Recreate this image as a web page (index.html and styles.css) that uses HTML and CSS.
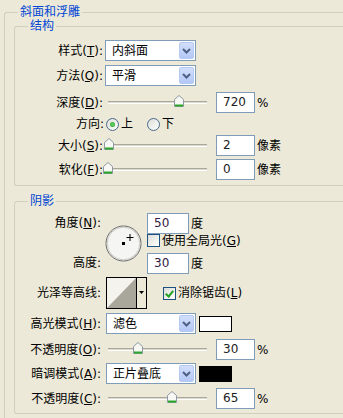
FILE: index.html
```html
<!DOCTYPE html>
<html lang="zh-CN">
<head>
	<meta charset="UTF-8">
	<meta name="viewport" content="width=device-width, initial-scale=1.0">
	<title>斜面和浮雕</title>
	<link rel="stylesheet" href="styles.css">
</head>
<body>
	<fieldset class="group outer">
		<legend>斜面和浮雕</legend>

		<!-- 结构 -->
		<fieldset class="group sub struct">
			<legend>结构</legend>
			<div class="row">
				<span class="lbl">样式(<u>T</u>):</span>
				<div class="select"><span>内斜面</span><i class="drop"><svg width="9" height="6" viewBox="0 0 9 6"><path d="M1 1L4.5 4.5L8 1" fill="none" stroke="#4d6185" stroke-width="2"/></svg></i></div>
			</div>
			<div class="row gap4">
				<span class="lbl">方法(<u>Q</u>):</span>
				<div class="select"><span>平滑</span><i class="drop"><svg width="9" height="6" viewBox="0 0 9 6"><path d="M1 1L4.5 4.5L8 1" fill="none" stroke="#4d6185" stroke-width="2"/></svg></i></div>
			</div>
			<div class="row gap6">
				<span class="lbl">深度(<u>D</u>):</span>
				<div class="slider"><div class="track"><i class="thumb" style="left: 72%"><svg width="10" height="12" viewBox="0 0 10 12"><path d="M0.5 11.5V4.5L5 0.5L9.5 4.5V11.5Z" fill="#f7f7f3" stroke="#8e99a4"/><path d="M1 10.5H9" stroke="#2aa62a" stroke-width="2"/></svg></i></div></div>
				<div class="field">720</div>
				<span class="unit">%</span>
			</div>
			<div class="row dir">
				<span class="lbl">方向:</span>
				<span class="radio on"></span><span class="opt">上</span>
				<span class="radio"></span><span class="opt">下</span>
			</div>
			<div class="row gap3">
				<span class="lbl">大小(<u>S</u>):</span>
				<div class="slider"><div class="track"><i class="thumb" style="left: 1%"><svg width="10" height="12" viewBox="0 0 10 12"><path d="M0.5 11.5V4.5L5 0.5L9.5 4.5V11.5Z" fill="#f7f7f3" stroke="#8e99a4"/><path d="M1 10.5H9" stroke="#2aa62a" stroke-width="2"/></svg></i></div></div>
				<div class="field">2</div>
				<span class="unit">像素</span>
			</div>
			<div class="row gap3">
				<span class="lbl">软化(<u>F</u>):</span>
				<div class="slider"><div class="track"><i class="thumb" style="left: 0%"><svg width="10" height="12" viewBox="0 0 10 12"><path d="M0.5 11.5V4.5L5 0.5L9.5 4.5V11.5Z" fill="#f7f7f3" stroke="#8e99a4"/><path d="M1 10.5H9" stroke="#2aa62a" stroke-width="2"/></svg></i></div></div>
				<div class="field">0</div>
				<span class="unit">像素</span>
			</div>
		</fieldset>

		<!-- 阴影 -->
		<fieldset class="group sub shade">
			<legend>阴影</legend>
			<div class="angle">
				<div class="angle-labels">
					<span class="lbl">角度(<u>N</u>):</span>
					<span class="lbl">高度:</span>
				</div>
				<div class="dial">
					<svg width="37" height="37" viewBox="0 0 37 37">
						<circle cx="18.5" cy="18.5" r="17.5" fill="#f5f5f3" stroke="#6b6b6b"/>
						<circle cx="18.5" cy="18.5" r="16.3" fill="none" stroke="#c9c9c4"/>
						<rect x="17" y="17" width="3" height="3" fill="#000"/>
						<path d="M21.5 12.5H28.5M25 9V16" stroke="#000"/>
					</svg>
				</div>
				<div class="angle-fields">
					<div class="field-row"><div class="field wide">50</div><span class="unit">度</span></div>
					<div class="check-row"><span class="check"></span><span>使用全局光(<u>G</u>)</span></div>
					<div class="field-row"><div class="field wide">30</div><span class="unit">度</span></div>
				</div>
			</div>
			<div class="row contour-row">
				<span class="lbl">光泽等高线:</span>
				<div class="contour">
					<svg width="41" height="32" viewBox="0 0 41 32">
						<rect x="0.5" y="0.5" width="40" height="31" fill="#ece9d8" stroke="#000"/>
						<rect x="1" y="1" width="29" height="30" fill="#f4f3ee"/>
						<path d="M1 31L30 1V31Z" fill="#a9a79b"/>
						<path d="M30.5 1V31" stroke="#000"/>
						<path d="M33 14H38L35.5 17Z" fill="#000"/>
					</svg>
				</div>
				<span class="check on"></span><span>消除锯齿(<u>L</u>)</span>
			</div>
			<div class="row gap4">
				<span class="lbl">高光模式(<u>H</u>):</span>
				<div class="select"><span>滤色</span><i class="drop"><svg width="9" height="6" viewBox="0 0 9 6"><path d="M1 1L4.5 4.5L8 1" fill="none" stroke="#4d6185" stroke-width="2"/></svg></i></div>
				<span class="swatch white"></span>
			</div>
			<div class="row gap5">
				<span class="lbl">不透明度(<u>O</u>):</span>
				<div class="slider"><div class="track"><i class="thumb" style="left: 30%"><svg width="10" height="12" viewBox="0 0 10 12"><path d="M0.5 11.5V4.5L5 0.5L9.5 4.5V11.5Z" fill="#f7f7f3" stroke="#8e99a4"/><path d="M1 10.5H9" stroke="#2aa62a" stroke-width="2"/></svg></i></div></div>
				<div class="field">30</div>
				<span class="unit">%</span>
			</div>
			<div class="row gap3">
				<span class="lbl">暗调模式(<u>A</u>):</span>
				<div class="select"><span>正片叠底</span><i class="drop"><svg width="9" height="6" viewBox="0 0 9 6"><path d="M1 1L4.5 4.5L8 1" fill="none" stroke="#4d6185" stroke-width="2"/></svg></i></div>
				<span class="swatch black"></span>
			</div>
			<div class="row gap4">
				<span class="lbl">不透明度(<u>C</u>):</span>
				<div class="slider"><div class="track"><i class="thumb" style="left: 65%"><svg width="10" height="12" viewBox="0 0 10 12"><path d="M0.5 11.5V4.5L5 0.5L9.5 4.5V11.5Z" fill="#f7f7f3" stroke="#8e99a4"/><path d="M1 10.5H9" stroke="#2aa62a" stroke-width="2"/></svg></i></div></div>
				<div class="field">65</div>
				<span class="unit">%</span>
			</div>
		</fieldset>
	</fieldset>
</body>
</html>
```

FILE: styles.css
```css
html, body {
	margin: 0;
	padding: 0;
	overflow: hidden;
	background-color: #ece9d8;
}
body {
	font-family: "DejaVu Sans", "Noto Sans CJK SC", sans-serif;
	font-size: 12px;
	line-height: 14px;
	color: #000;
}
u {
	text-decoration: underline;
	text-underline-offset: 1px;
}

/* group boxes: the right edge runs off the cropped dialog */
.group {
	border: 1px solid #d0d0bf;
	border-right: 0;
	border-radius: 3px 0 0 3px;
	min-inline-size: 0;
}
.group legend {
	color: #0046d5;
	line-height: 14px;
	padding: 0 2px;
}
.outer {
	margin: 5px 0 0 4px;
	padding: 0 0 20px 9px;
}
.outer > legend {
	margin-left: 4px;
}
.sub {
	margin: 0;
	padding: 7px 0 5px 0;
}
.sub > legend {
	margin-left: 13px;
}
.shade {
	margin-top: 8px;
	padding: 5px 0 4px 0;
}

/* rows */
.row {
	display: flex;
	align-items: center;
	height: 21px;
	white-space: nowrap;
}
.gap3 { margin-top: 3px; }
.gap4 { margin-top: 4px; }
.gap5 { margin-top: 5px; }
.gap6 { margin-top: 6px; }
.lbl {
	width: 90px;
	padding-right: 2px;
	box-sizing: border-box;
	text-align: right;
	white-space: nowrap;
	flex: none;
}
.shade .lbl {
	width: 91px;
	padding-right: 5px;
}

/* dropdown */
.select {
	width: 91px;
	height: 21px;
	box-sizing: border-box;
	border: 1px solid #7f9db9;
	background-color: #fff;
	display: flex;
	align-items: center;
	flex: none;
}
.shade .select {
	width: 90px;
}
.select span {
	flex: 1;
	padding-left: 6px;
}
.drop {
	width: 15px;
	height: 17px;
	margin-right: 1px;
	box-sizing: border-box;
	border: 1px solid #b6c9f3;
	border-radius: 2px;
	background: linear-gradient(#d2defb, #b4c8f6);
	display: flex;
	align-items: center;
	justify-content: center;
}

/* slider */
.slider {
	width: 111px;
	height: 21px;
	padding-left: 3px;
	box-sizing: border-box;
	display: flex;
	align-items: center;
	flex: none;
}
.shade .slider {
	width: 110px;
	padding-left: 2px;
}
.track {
	position: relative;
	width: 99px;
	height: 3px;
	box-sizing: border-box;
	border-top: 1px solid #aca899;
	border-bottom: 1px solid #fff;
	background-color: #dcdad0;
}
.thumb {
	position: absolute;
	top: -7px;
	margin-left: -5px;
	width: 10px;
	height: 12px;
	display: block;
}
.thumb svg {
	display: block;
}

/* text field */
.field {
	width: 39px;
	height: 21px;
	box-sizing: border-box;
	border: 1px solid #7f9db9;
	background-color: #fff;
	padding-left: 6px;
	line-height: 19px;
	color: #222;
	flex: none;
}
.field.wide {
	width: 42px;
	color: #302040;
}
.unit {
	margin-left: 2px;
}

/* radio */
.dir {
	height: 16px;
	margin-top: 3px;
}
.dir .lbl {
	padding-right: 1px;
}
.radio {
	width: 13px;
	height: 13px;
	box-sizing: border-box;
	border: 1px solid #4a6a8e;
	border-radius: 50%;
	background: linear-gradient(135deg, #dcdcd7, #fff);
	margin-left: 1px;
	position: relative;
	flex: none;
}
.radio + .opt {
	margin-left: 2px;
	margin-right: 13px;
}
.radio.on::after {
	content: "";
	position: absolute;
	left: 3px;
	top: 3px;
	width: 5px;
	height: 5px;
	border-radius: 50%;
	background: radial-gradient(#6fd36f, #21a121);
}

/* checkbox */
.check {
	width: 13px;
	height: 13px;
	box-sizing: border-box;
	border: 1px solid #1c5180;
	background: linear-gradient(135deg, #dcdcd7, #fff);
	margin-right: 2px;
	position: relative;
	flex: none;
}
.check.on::after {
	content: "";
	position: absolute;
	left: 3px;
	top: 1px;
	width: 3px;
	height: 6px;
	border: solid #21a121;
	border-width: 0 2px 2px 0;
	transform: rotate(40deg);
}

/* angle block */
.angle {
	display: flex;
	height: 61px;
}
.angle-labels {
	display: flex;
	flex-direction: column;
	justify-content: space-between;
}
.angle-labels .lbl {
	line-height: 21px;
}
.dial {
	width: 41px;
	padding-top: 12px;
	flex: none;
}
.dial svg {
	display: block;
	margin-left: -1px;
}
.angle-fields {
	display: flex;
	flex-direction: column;
}
.field-row {
	display: flex;
	align-items: center;
	height: 21px;
}
.check-row {
	height: 19px;
	display: flex;
	align-items: flex-start;
	white-space: nowrap;
}

/* contour */
.contour-row {
	height: 32px;
	margin-top: 3px;
}
.contour {
	width: 41px;
	height: 32px;
	margin-right: 16px;
	flex: none;
}
.contour svg {
	display: block;
}

/* color swatches */
.swatch {
	width: 33px;
	height: 16px;
	box-sizing: border-box;
	margin-left: 3px;
	border: 1px solid #000;
	flex: none;
}
.swatch.white {
	background-color: #fff;
}
.swatch.black {
	background-color: #000;
}
```
